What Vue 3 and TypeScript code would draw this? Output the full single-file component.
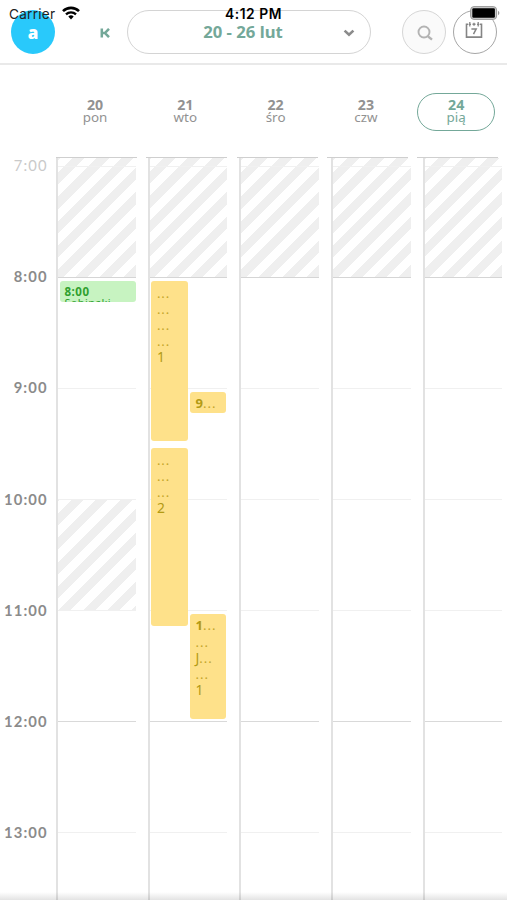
<script setup lang="ts">
interface Line { text: string; dots?: string; bold?: boolean }
interface CalendarEvent { top: number; height: number; left: number; width: number; tone: string; lines: Line[] }
interface Day { num: number; name: string; today?: boolean; breakHour?: boolean; events: CalendarEvent[] }

const dots = '...'
const hours = ['8:00', '9:00', '10:00', '11:00', '12:00', '13:00']

const days: Day[] = [
  {
    num: 20, name: 'pon', breakHour: true,
    events: [
      { top: 123.5, height: 21.5, left: 1.5, width: 76.5, tone: 'green', lines: [{ text: '8:00', bold: true }, { text: 'Sabinski' }] },
    ],
  },
  {
    num: 21, name: 'wto',
    events: [
      { top: 123.5, height: 160.5, left: 1.7, width: 36.5, tone: 'yellow', lines: [{ text: '', dots }, { text: '', dots }, { text: '', dots }, { text: '', dots }, { text: '1' }] },
      { top: 234.5, height: 21.5, left: 40.3, width: 36.5, tone: 'yellow', lines: [{ text: '9', dots, bold: true }, { text: 'A', bold: true }] },
      { top: 290.5, height: 178.5, left: 1.7, width: 36.5, tone: 'yellow', lines: [{ text: '', dots }, { text: '', dots }, { text: '', dots }, { text: '2' }] },
      { top: 457.3, height: 104.3, left: 40.3, width: 36.5, tone: 'yellow', lines: [{ text: '1', dots, bold: true }, { text: '', dots }, { text: 'J', dots }, { text: '', dots }, { text: '1' }] },
    ],
  },
  { num: 22, name: 'śro', events: [] },
  { num: 23, name: 'czw', events: [] },
  { num: 24, name: 'pią', today: true, events: [] },
]
</script>

<template>
  <div class="screen">
    <header class="bar">
      <div class="avatar">a</div>
      <svg class="skip" viewBox="0 0 11 10" width="11" height="10">
        <path d="M1.8 .4v9.2M9 .8 5 5l4 4.2M2 5h3" fill="none" stroke="#74a899" stroke-width="2.5" />
      </svg>
      <div class="range">
        <span>20 - 26 lut</span>
        <svg class="chevron" viewBox="0 0 12 8" width="12" height="8">
          <path d="M1.6 1.6 6 5.8l4.4-4.2" fill="none" stroke="#8b8b8b" stroke-width="2.6" />
        </svg>
      </div>
      <div class="round search">
        <svg viewBox="0 0 18 18" width="18" height="18" fill="none" stroke="#b3b3b3">
          <circle cx="8" cy="8" r="5.5" stroke-width="1.9" />
          <path d="M12 12.3l4 3.4" stroke-width="2.4" />
        </svg>
      </div>
      <div class="round today-button">
        <svg viewBox="0 0 18 18" width="18" height="18" fill="none" stroke="#858585" stroke-width="1.6">
          <path d="M3 3.3H1.5v12.8h15V3.3H15M7.5 3.3h3" />
          <path d="M4.8 1v4.6M13.2 1v4.6M9 1.8v3M3.6 3.3h2.4M12 3.3h2.4" stroke-width="1.3" />
          <path d="M6.4 7.9h4.8L8.5 13.2" stroke-width="1.5" />
        </svg>
      </div>
    </header>

    <div class="status">
      <span class="carrier">Carrier</span>
      <svg class="wifi" viewBox="0 0 18 14" width="18" height="14">
        <path d="M1 5.1a11.5 11.5 0 0 1 16 0" fill="none" stroke="#000" stroke-width="2.6" />
        <path d="M4 8.3a7.2 7.2 0 0 1 10 0" fill="none" stroke="#000" stroke-width="2.3" />
        <path d="M6.3 10.6a4 4 0 0 1 5.4 0L9 13.6Z" fill="#000" />
      </svg>
      <span class="clock">4:12 PM</span>
      <svg class="battery" viewBox="0 0 30 14" width="30" height="14">
        <rect x=".6" y=".6" width="26" height="12.8" rx="3.4" fill="#ccc" stroke="#999" stroke-width="1" />
        <rect x="2.3" y="2.3" width="22.6" height="9.4" rx="1.2" fill="#000" />
        <path d="M28 4.8v4.4q1.4-.7 1.4-2.2T28 4.8Z" fill="#999" />
      </svg>
    </div>

    <section class="days">
      <div v-for="day in days" :key="day.num" class="day" :class="{ today: day.today }">
        <b>{{ day.num }}</b>
        <span>{{ day.name }}</span>
      </div>
    </section>

    <main class="schedule">
      <div class="hours">
        <div class="hour first">7:00</div>
        <div v-for="hour in hours" :key="hour" class="hour">{{ hour }}</div>
      </div>
      <div v-for="(day, d) in days" :key="day.num" class="column">
        <div class="rule" :style="{ marginLeft: -2 - d * 1.4 + 'px' }"></div>
        <div class="cell closed"><i></i></div>
        <div class="cell"></div>
        <div class="cell"></div>
        <div class="cell" :class="{ pause: day.breakHour }"></div>
        <div class="cell noon"></div>
        <div class="cell"></div>
        <div class="cell last"></div>
        <div
          v-for="(event, i) in day.events"
          :key="i"
          class="event"
          :class="event.tone"
          :style="{ top: event.top + 'px', left: event.left + 'px', width: event.width + 'px', height: event.height + 'px' }"
        >
          <div v-for="(line, n) in event.lines" :key="n" class="line" :class="{ bold: line.bold }">{{ line.text }}<span v-if="line.dots" class="dots">{{ line.dots }}</span></div>
        </div>
      </div>
    </main>
    <div class="fade"></div>
  </div>
</template>

<style>
body { margin: 0; overflow: hidden; background: #fff; }
</style>

<style scoped>
.screen {
  position: relative;
  width: 507px;
  height: 900px;
  overflow: hidden;
  box-sizing: border-box;
  background: #fff;
  font-family: "Noto Sans", "Open Sans", sans-serif;
}
.bar {
  display: flex;
  align-items: flex-start;
  height: 63px;
  padding: 10px 10px 0 11px;
  box-sizing: border-box;
  box-shadow: 0 2px 0 #e9e9e9;
}
.avatar {
  width: 44px;
  height: 44px;
  border-radius: 50%;
  background: #29c9fb;
  color: #fff;
  font: 800 17px/45px "Open Sans", "Noto Sans", sans-serif;
  text-align: center;
}
.skip { margin: 18px 0 0 45px; }
.range {
  position: relative;
  display: flex;
  justify-content: center;
  width: 244px;
  height: 44px;
  margin-left: 16px;
  box-sizing: border-box;
  border: 1px solid #d4d4d4;
  border-radius: 22px;
  color: #74a899;
  font: 700 16.7px/42px "Noto Sans", sans-serif;
}
.range span { margin-left: -12px; }
.chevron { position: absolute; right: 15px; top: 18px; }
.round {
  display: flex;
  align-items: center;
  justify-content: center;
  width: 44px;
  height: 44px;
  box-sizing: border-box;
  border: 1px solid #d6d6d6;
  border-radius: 50%;
}
.search { margin-left: 31px; background: #fafafa; }
.search svg { margin: 1px 0 0 1px; }
.today-button { margin-left: 7px; border-color: #a6a6a6; }
.today-button svg { margin: -5px 2px 0 0; }
.status { position: absolute; inset: 0 0 auto; height: 28px; color: #222; }
.carrier { position: absolute; left: 9px; font: 13.6px/28px Inter, sans-serif; letter-spacing: .25px; }
.wifi { position: absolute; left: 62px; top: 6px; }
.clock { position: absolute; left: 225px; color: #000; font: 600 13.8px/28px Inter, sans-serif; white-space: nowrap; letter-spacing: .55px; }
.battery { position: absolute; left: 470px; top: 6px; }

.days {
  display: grid;
  grid-template-columns: repeat(5, 78px);
  column-gap: 12.3px;
  height: 94px;
  padding: 30px 0 0 56px;
  box-sizing: border-box;
}
.day {
  display: flex;
  flex-direction: column;
  align-items: center;
  height: 38px;
  padding-top: 4px;
  box-sizing: border-box;
  border: 1.4px solid transparent;
  border-radius: 19px;
  color: #929292;
  font-size: 13.4px;
  line-height: 13px;
}
.day b { font-size: 14.2px; line-height: 13px; }
.day.today { border-color: #74a899; color: #74a899; }

.schedule {
  display: grid;
  grid-template-columns: 56px repeat(5, 81px);
  column-gap: 10.7px;
  margin-left: -10.7px;
  height: 743px;
  overflow: hidden;
}
.hours {
  position: relative;
  left: 2.5px;
  color: #8b8b8b;
  font: 700 14.8px/17px "Lato", sans-serif;
  letter-spacing: 1.15px;
  text-align: right;
}
.hour { height: 111.2px; box-sizing: border-box; }
.hour.first { color: #cacaca; font-weight: 400; }
.column { position: relative; border-left: 2px solid #e2e2e2; height: 743px; box-sizing: border-box; }
.rule { height: 1px; width: 81px; background: #cfcfcf; }
.cell { width: 77.5px; height: 111.2px; box-sizing: border-box; border-bottom: 1.5px solid #f0f0f0; }
.closed {
  height: 119.5px;
  padding-top: 7.5px;
  border-bottom-color: #d5d5d5;
  background: repeating-linear-gradient(-45deg, #efefef 0 8.6px, #fff 8.6px 17.2px);
}
.closed i { display: block; height: 1px; background: #f1f1f1; }
.pause { background: repeating-linear-gradient(-45deg, #efefef 0 3px, #fff 3px 11.6px, #efefef 11.6px 17.2px); }
.noon { border-bottom-color: #d9d9d9; }
.last { border: 0; }
.event {
  position: absolute;
  box-sizing: border-box;
  padding: 4px 0 0 5.5px;
  overflow: hidden;
  border-radius: 3px;
}
.yellow { background: #fee18a; color: #b39a14; font-size: 13.8px; }
.green { background: #c7f3c1; color: #2fa02f; font-size: 11.5px; padding: 3px 0 0 5px; letter-spacing: .5px; }
.line { height: 16px; line-height: 15px; white-space: nowrap; }
.yellow .line.bold { font-size: 13px; }
.yellow .line:nth-child(2).bold { padding-left: 1px; font-size: 11px; line-height: 9px; }
.green .line { height: 12px; line-height: 15px; }
.green .line + .line { line-height: 14px; font-size: 11px; }
.bold { font-weight: 700; }
.dots { font-size: 13px; font-weight: 400; letter-spacing: 1px; color: #c3a52b; }
.fade {
  position: absolute;
  inset: auto 0 0;
  height: 8px;
  background: linear-gradient(rgba(0, 0, 0, 0), rgba(0, 0, 0, .11));
}
</style>
